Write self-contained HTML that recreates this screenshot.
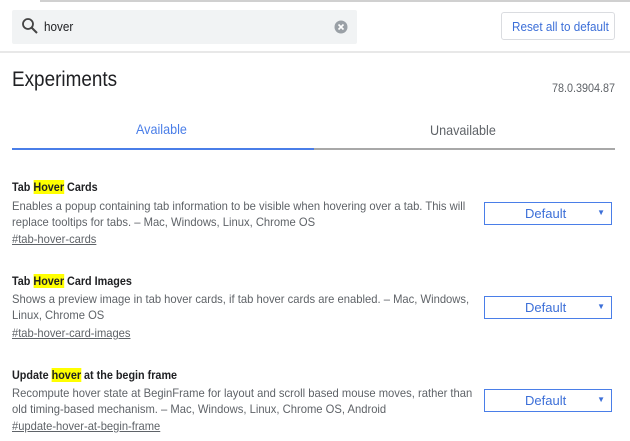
<!DOCTYPE html><html><head><meta charset="utf-8"><style>
body{margin:0;width:630px;height:441px;overflow:hidden;background:#fff;font-family:"Liberation Sans",sans-serif;position:relative}
.a{position:absolute;white-space:nowrap;transform-origin:0 0;transform:scaleX(.9)}
.t{font-size:12px;font-weight:bold;color:#202124}
.d{font-size:12px;color:#5f6368;transform:scaleX(.935)}
.l{font-size:12px;color:#5f6368;text-decoration:underline;transform:scaleX(.93)}
mark{background:#ffff00;color:inherit}
.sel{position:absolute;left:484px;width:126px;height:21px;border:1px solid #4a7ee8;color:#3c6fd8;font-size:13px}
.sel span{position:absolute;left:40px;top:3px}
.sel i{position:absolute;right:6px;top:5px;font-style:normal;font-size:8px}
</style></head><body>
<div style="position:absolute;left:40px;top:0;width:590px;height:2px;background:#d0d0d0"></div>
<div style="position:absolute;left:12px;top:10px;width:345px;height:34px;background:#f1f3f4;border-radius:2px"></div>
<svg style="position:absolute;left:21px;top:17px" width="18" height="18" viewBox="0 0 18 18"><circle cx="7" cy="7" r="5" fill="none" stroke="#444" stroke-width="1.8"/><path d="M10.5 10.5L16 16" stroke="#444" stroke-width="2"/></svg>
<div class="a" style="left:44px;top:19px;font-size:13px;color:#202124">hover</div>
<svg style="position:absolute;left:334px;top:20px" width="14" height="14"><circle cx="7" cy="7" r="6.5" fill="#9aa0a6"/><path d="M4.5 4.5l5 5M9.5 4.5l-5 5" stroke="#fff" stroke-width="1.6"/></svg>
<div style="position:absolute;left:501px;top:12px;width:114px;height:28px;border:1px solid #dadce0;border-radius:3px;box-sizing:border-box"></div>
<div class="a" style="left:512px;top:19px;font-size:13px;color:#3c6fd8">Reset all to default</div>
<div style="position:absolute;left:0;top:51px;width:630px;height:2px;background:#e8e8e8"></div>
<div class="a" style="left:12px;top:68px;font-size:21px;color:#202124">Experiments</div>
<div class="a" style="left:552px;top:81px;font-size:12px;color:#5f6368">78.0.3904.87</div>
<div class="a" style="left:136px;top:121px;font-size:14px;color:#4a7ee8">Available</div>
<div class="a" style="left:430px;top:122px;font-size:14px;color:#5f6368">Unavailable</div>
<div style="position:absolute;left:12px;top:148px;width:302px;height:2px;background:#4a7ee8"></div>
<div style="position:absolute;left:314px;top:148px;width:301px;height:2px;background:#a8a8a8"></div>

<div class="a t" style="left:12px;top:180px">Tab <mark>Hover</mark> Cards</div>
<div class="a d" style="left:12px;top:199px">Enables a popup containing tab information to be visible when hovering over a tab. This will</div>
<div class="a d" style="left:12px;top:215px">replace tooltips for tabs. – Mac, Windows, Linux, Chrome OS</div>
<div class="a l" style="left:12px;top:232px">#tab-hover-cards</div>
<div class="sel" style="top:202px"><span>Default</span><i>▼</i></div>

<div class="a t" style="left:12px;top:274px">Tab <mark>Hover</mark> Card Images</div>
<div class="a d" style="left:12px;top:292px">Shows a preview image in tab hover cards, if tab hover cards are enabled. – Mac, Windows,</div>
<div class="a d" style="left:12px;top:308px">Linux, Chrome OS</div>
<div class="a l" style="left:12px;top:326px">#tab-hover-card-images</div>
<div class="sel" style="top:296px"><span>Default</span><i>▼</i></div>

<div class="a t" style="left:12px;top:368px">Update <mark>hover</mark> at the begin frame</div>
<div class="a d" style="left:12px;top:386px">Recompute hover state at BeginFrame for layout and scroll based mouse moves, rather than</div>
<div class="a d" style="left:12px;top:402px">old timing-based mechanism. – Mac, Windows, Linux, Chrome OS, Android</div>
<div class="a l" style="left:12px;top:419px">#update-hover-at-begin-frame</div>
<div class="sel" style="top:389px"><span>Default</span><i>▼</i></div>
</body></html>
